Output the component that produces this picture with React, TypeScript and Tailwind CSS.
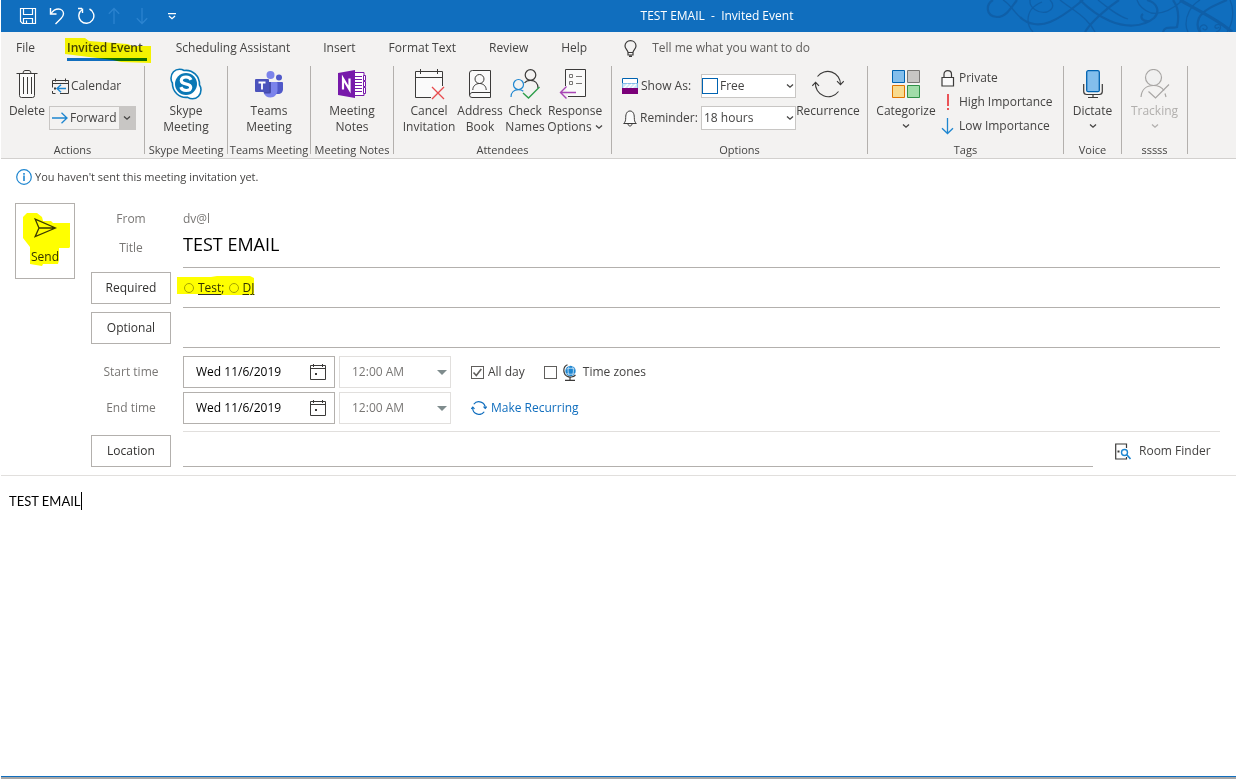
import type { ReactNode } from 'react';

const ink = '#3b3a39';
const blue = '#1e86d0';

function ChevronDown({ className = '' }: { className?: string }) {
    return (
        <svg width="8" height="6" viewBox="0 0 8 6" fill="none" stroke="currentColor" strokeWidth="1.3" className={className} aria-hidden="true">
            <path d="M1 1.500 4 4.200 7 1.500" />
        </svg>
    );
}

function SaveIcon() {
    return (
        <svg width="18" height="18" viewBox="0 0 18 18" fill="none" stroke="#fff" strokeWidth="1.2" aria-hidden="true">
            <path d="M1.5 1.5h15v15h-13l-2-2z" />
            <path d="M4.500 1.500v6h9v-6M4.500 16.500v-5h9v5M7.500 16.500v-3" />
        </svg>
    );
}

function UndoIcon() {
    return (
        <svg width="16" height="18" viewBox="0 0 16 18" fill="none" stroke="#fff" strokeWidth="1.4" aria-hidden="true">
            <path d="M1.500 1v6h6" />
            <path d="M1.800 6.800C4 3.500 6.500 2 9.500 2c3 0 5 2.200 5 4.800 0 2.200-1 3.200-2.500 4.700L6.500 17" />
        </svg>
    );
}

function RedoIcon() {
    return (
        <svg width="18" height="18" viewBox="0 0 18 18" fill="none" stroke="#fff" strokeWidth="1.4" aria-hidden="true">
            <path d="M5 1.500h-4M5.500 1.500v4.500" />
            <path d="M5.300 2.500A7.500 7.500 0 1 0 12.500 2" />
        </svg>
    );
}

function VerticalArrow({ down = false }: { down?: boolean }) {
    return (
        <svg width="12" height="18" viewBox="0 0 12 18" fill="none" stroke="#2b83cf" strokeWidth="1.300" className={down ? 'rotate-180' : ''} aria-hidden="true">
            <path d="M6 17V1.500M.8 6.700 6 1.500l5.200 5.200" />
        </svg>
    );
}

function Swirls() {
    return (
        <svg width="250" height="32" viewBox="0 0 250 32" fill="none" stroke="#0f5fa8" className="absolute right-0 top-0" aria-hidden="true">
            <g strokeWidth="1.300">
                <path d="M17 0C24 4 28 12 34 17" />
                <path d="M56 2C46 6 42 12 42 20c0 5 2 9 5 12" />
                <path d="M64 0c4 4 4 9-3 12-8 2-18-4-17-12" />
                <path d="M74 0c10 8 18 12 26 20 4 4 7 8 9 12" />
                <path d="M112 0c10 8 20 16 30 19" />
                <path d="M151 0c2 6 6 10 14 13 12 2 22-4 32-13" />
                <path d="M214 0c-10 6-14 16-14 24 0 3 1 6 2 8" />
                <path d="M244 0c4 8 4 22-3 32" />
                <path d="M215 32c-4-5 3-10 6-5 1 3-4 4-4 1M230 32c6-2 6-10 0-7-3 2 1 5 3 2" />
            </g>
            <g strokeWidth="2.200">
                <path d="M31 0C25 8 20 17 11 17-1 16 0 4 7 0" />
                <path d="M34 17c8 8 20 9 30 5 13-5 23-14 33-22" />
                <path d="M94 0c8 8 18 16 30 21 14 6 32 7 44-3 6-6 4-15-7-18" />
                <path d="M163 21c-6 1-10-4-6-7" />
                <path d="M99 32c6-10 22-24 34-32" />
                <path d="M187 0c6 8 6 18 4 27-4 2-12-2-14 5" />
                <path d="M241 0c-12 5-24 10-28 18-2 5-2 10 1 14" />
            </g>
            <path d="M194 0c14 8 30 16 43 25 4 3 7 5 9 7" strokeWidth="3.200" />
        </svg>
    );
}

function TrashIcon() {
    return (
        <svg width="22" height="28" viewBox="0 0 22 28" fill="none" stroke={ink} aria-hidden="true">
            <path d="M3.500 4v21.500q0 2 2 2h11q2 0 2-2V4" fill="#fafafa" />
            <path d="M.5 3.500h21M7 3.500Q7 .5 9 .5h4q2 0 2 3M7.500 7v17M11.500 7v17M15.500 7v17" />
        </svg>
    );
}

function CalendarBackIcon() {
    return (
        <svg width="17" height="17" viewBox="0 0 17 17" fill="none" stroke={ink} aria-hidden="true">
            <path d="M8 15.500h8.500v-13H.5v7M.5 5.500h16M3.500.5v3M13.500.5v3M.5 13v2.500h3" />
            <path d="M14 10.500H5M9 6.700 5 10.500l4 3.800" stroke={blue} strokeWidth="1.400" />
            <path d="M2 9.500h2v2H2z" fill={ink} stroke="none" />
        </svg>
    );
}

function ForwardIcon() {
    return (
        <svg width="16" height="12" viewBox="0 0 16 12" fill="none" stroke={blue} strokeWidth="1.300" aria-hidden="true">
            <path d="M0 6h15M9.500.8 15 6l-5.500 5.200" />
        </svg>
    );
}

function SkypeIcon() {
    return (
        <svg width="32" height="32" viewBox="0 0 32 32" aria-hidden="true">
            <path
                d="M9.500 1.200c2 0 3.500.6 4.600 1.300C22.500 1.300 29.800 8 29.500 17c1 1.300 1.500 3 1.500 4.800 0 5-3.800 9-8.500 9-2 0-3.500-.6-4.800-1.500C9 30.300 2.300 23.500 2.400 15 1.500 13.700 1 12 1 10.200c0-5 3.800-9 8.500-9z"
                fill="#fff"
                stroke="#0a78b5"
                strokeWidth="1.600"
            />
            <circle cx="16" cy="16" r="11" fill="#0a78b5" />
            <path
                d="M21 11.800c-.8-2-2.600-2.800-5-2.800-2.800 0-4.700 1.200-4.700 3.400 0 4.800 9.400 2.400 9.400 6.800 0 2.200-2.100 3.300-4.600 3.300-2.800 0-4.400-1.100-5.300-3.300"
                fill="none"
                stroke="#fff"
                strokeWidth="3.200"
            />
        </svg>
    );
}

function TeamsIcon() {
    return (
        <svg width="28" height="27" viewBox="0 0 28 27" aria-hidden="true">
            <circle cx="24" cy="6.500" r="3" fill="#5059c9" />
            <circle cx="15.500" cy="4" r="4" fill="#7b83eb" />
            <path d="M20 11h7q1 0 1 1v6c0 3-2 5-5 5h-3z" fill="#5059c9" />
            <path d="M10 11h11.500q1 0 1 1v7c0 4-3 7.500-7 7.500-3.500 0-6-2-7-5z" fill="#7b83eb" />
            <path d="M10 11h6v10q0 1.500-1.500 1.500H9z" fill="#444bab" />
            <rect y="8" width="14" height="13" rx="1" fill="#4b53bc" />
            <path d="M3.500 11.500h7M7 11.500v7" stroke="#fff" strokeWidth="1.800" />
        </svg>
    );
}

function OneNoteIcon() {
    return (
        <svg width="28" height="28" viewBox="0 0 28 28" aria-hidden="true">
            <path d="M15 2.500h11v23H15" fill="#fff" stroke="#7719aa" />
            <path d="M17 6.500h7M17 9.500h7M17 12.500h7M17 15.500h7M17 18.500h7M17 21.500h7" stroke="#7719aa" />
            <path d="M25.500 5.500h2v5h-2zM25.500 11.500h2v5h-2zM25.500 17.500h2v6h-2z" fill="#fff" stroke="#7719aa" />
            <path d="M0 3 17 0v28L0 25z" fill="#7719aa" />
            <path d="M5 19.500v-11l6.500 11v-11" fill="none" stroke="#fff" strokeWidth="2.200" />
        </svg>
    );
}

function CancelInvitationIcon() {
    return (
        <svg width="31" height="31" viewBox="0 0 31 31" fill="none" stroke={ink} aria-hidden="true">
            <path d="M17 28.500H1.500v-26h27V17" fill="#fafafa" />
            <path d="M1.500 8.500h27M6.500 0v5M23.500 0v5" />
            <path d="m18 18 12 12M30 18 18 30" stroke="#e84a4d" strokeWidth="1.300" />
        </svg>
    );
}

function AddressBookIcon() {
    return (
        <svg width="22" height="28" viewBox="0 0 22 28" fill="none" stroke={ink} aria-hidden="true">
            <path d="M21.500.5H3.500Q.5.5.5 3v22q0 2.500 2.500 2.500h18.500z" fill="#fafafa" />
            <path d="M21 22.500H3Q.7 23 .7 25" />
            <circle cx="10.500" cy="9" r="4.500" />
            <path d="M3.800 20c0-4 3-6.500 6.700-6.500s6.700 2.500 6.700 6.500" />
        </svg>
    );
}

function CheckNamesIcon() {
    return (
        <svg width="30" height="30" viewBox="0 0 30 30" fill="none" strokeWidth="1.200" aria-hidden="true">
            <circle cx="20.500" cy="6" r="5.300" stroke={ink} />
            <path d="M14.500 14c1.500-2 3.500-2.700 6-2.700 4.500 0 7.500 3 7.500 7.700" stroke={ink} />
            <circle cx="8.500" cy="15.500" r="5" stroke={blue} />
            <path d="M1 28c0-4.500 3-7.300 7.500-7.300 2 0 3.500.5 4.800 1.500" stroke={blue} />
            <path d="m13 24 5.500 5L29.500 18" stroke="#2e9e4b" strokeWidth="1.400" />
        </svg>
    );
}

function ResponseIcon() {
    return (
        <svg width="32" height="30" viewBox="0 0 32 30" fill="none" stroke={ink} aria-hidden="true">
            <path d="M6.500 17V.5h20v27H9" fill="#fafafa" />
            <path d="M10.500 5.500h3v3h-3zM10.500 12.500h3v3h-3zM17 7.500h6M17 14.500h6" stroke="#797775" />
            <path d="M17 23.500H1.500M7.500 17.500l-6 6 6 6" stroke="#a846b5" strokeWidth="1.400" />
        </svg>
    );
}

function ShowAsIcon() {
    return (
        <svg width="16" height="16" viewBox="0 0 16 16" aria-hidden="true">
            <path d="M.5.5h15v5H.5z" fill="#fff" stroke="#0063b1" />
            <path d="M.5 5.500h15v5H.5z" fill="#cfe6f8" stroke="#83bde9" />
            <path d="m2 10 4-4M6 10l4-4M10 10l4-4" stroke="#fff" strokeWidth="1.300" />
            <path d="M0 10h16v6H0z" fill="#7a0078" />
        </svg>
    );
}

function BellIcon() {
    return (
        <svg width="14" height="17" viewBox="0 0 14 17" fill="none" stroke={ink} aria-hidden="true">
            <path d="M.7 13.500c1.800-1.500 2-3.500 2-6 0-4 1.500-6.500 4.300-6.500s4.300 2.500 4.300 6.500c0 2.500.2 4.500 2 6z" fill="#fafafa" />
            <path d="M5 14c.3 2.700 3.700 2.700 4 0" />
        </svg>
    );
}

function RecurrenceIcon({ size = 32, color = ink }: { size?: number; color?: string }) {
    return (
        <svg width={size} height={(size * 28) / 32} viewBox="0 0 32 28" fill="none" stroke={color} strokeWidth={size > 20 ? 1.1 : 2.4} aria-hidden="true">
            <path d="M28.500 14.500A12.800 12.800 0 0 0 5.500 6.500M3.500 12.500a12.800 12.800 0 0 0 23 9" />
            <path d="m25 11.200 3.500 3.500 3.300-3.500M.3 15.800l3.300-3.500 3.400 3.500" />
        </svg>
    );
}

function CategorizeIcon() {
    return (
        <svg width="28" height="28" viewBox="0 0 28 28" aria-hidden="true">
            <path d="M.5.500h12v12H.5z" fill="#83beec" stroke="#0063b1" />
            <path d="M15.500.500h12v12h-12z" fill="#c8c6c4" stroke="#797775" />
            <path d="M.5 15.500h12v12H.5z" fill="#f8db8f" stroke="#e07400" />
            <path d="M15.500 15.500h12v12h-12z" fill="#a1dca9" stroke="#309048" />
        </svg>
    );
}

function LockIcon() {
    return (
        <svg width="14" height="17" viewBox="0 0 14 17" fill="none" stroke={ink} strokeWidth="1.200" aria-hidden="true">
            <path d="M1 7.500h11.500v8.500H1z" fill="#fafafa" />
            <path d="M3 7.500V4.200C3 2 4.500.7 6.700.7s3.800 1.300 3.800 3.500v3.300" />
        </svg>
    );
}

function HighIcon() {
    return (
        <svg width="14" height="17" viewBox="0 0 14 17" fill="#ea5357" aria-hidden="true">
            <path d="M6 0h2v12H6zM6 14h2v2H6z" />
        </svg>
    );
}

function LowIcon() {
    return (
        <svg width="14" height="17" viewBox="0 0 14 17" fill="none" stroke={blue} strokeWidth="1.300" aria-hidden="true">
            <path d="M6.500 0v15.500M1 10.200l5.500 5.300 5.500-5.300" />
        </svg>
    );
}

function MicIcon() {
    return (
        <svg width="20" height="28" viewBox="0 0 20 28" fill="none" stroke={ink} aria-hidden="true">
            <path d="M.7 14v7.500q0 3 3 3h12.600q3 0 3-3V14M10 24.500v3M5 27.500h10" strokeWidth="1.200" />
            <rect x="3.700" y=".7" width="12.600" height="21" rx="1.500" fill="#83beec" stroke="#0063b1" strokeWidth="1.300" />
        </svg>
    );
}

function TrackingIcon() {
    return (
        <svg width="30" height="30" viewBox="0 0 30 30" fill="none" stroke="#a8a6a4" strokeWidth="1.200" aria-hidden="true">
            <circle cx="13.500" cy="8.500" r="8" fill="#f0f0f0" />
            <path d="M1 28c.5-7 5-11.500 12.500-11.500 5 0 8.500 2 10.500 5M26 28l-1-3.500" />
            <path d="m8.500 22.500 7 6.500L29 15.500" />
        </svg>
    );
}

function BulbIcon() {
    return (
        <svg width="13" height="17" viewBox="0 0 13 17" fill="none" stroke={ink} strokeWidth="1.200" aria-hidden="true">
            <path d="M4 12.500c0-2.500-3-3.500-3-6.500 0-3.200 2.500-5.300 5.500-5.300S12 2.800 12 6c0 3-3 4-3 6.500zM4 12.500V15h5v-2.500M5 16.300h3" />
        </svg>
    );
}

function SendIcon() {
    return (
        <svg width="23" height="20" viewBox="0 0 23 20" fill="none" stroke={ink} strokeWidth="1.300" aria-hidden="true">
            <path d="M1.200 1.200 21.500 10 1.200 18.500 5 10zM5 10h16" />
        </svg>
    );
}

function DateIcon() {
    return (
        <svg width="16" height="17" viewBox="0 0 16 17" fill="none" stroke={ink} aria-hidden="true">
            <path d="M.5 1.500h15v14H.5zM.5 4.500h15M3.500 0v3M12.500 0v3" />
            <path d="M5 9h2v2H5z" fill={ink} stroke="none" />
        </svg>
    );
}

function GlobeIcon() {
    return (
        <svg width="14" height="17" viewBox="0 0 14 17" fill="none" aria-hidden="true">
            <circle cx="7.500" cy="7" r="5.200" fill="#1e86d0" />
            <path d="M3.500 5c3-1 6-1 8 0M3.500 9.500c3 1 6 1 8 0M6 2.500c-1.500 3-1 6 0 9M9.500 2.500c1.500 3 1 6 0 9" stroke="#cfe6f8" strokeWidth=".8" />
            <path d="M4.500.8C1.500 2 .5 5 1 8c.8 3.500 4 5.500 7.500 5 1.700-.3 3-1 4-2M7 13v3M2 16.300h10" stroke={ink} strokeWidth="1.200" />
        </svg>
    );
}

function RoomFinderIcon() {
    return (
        <svg width="16" height="17" viewBox="0 0 16 17" fill="none" aria-hidden="true">
            <path d="M11.500 5V1H.7v15h10.800v-2" stroke={ink} strokeWidth="1.200" />
            <path d="M2.500 7.500h2v2h-2z" fill={ink} />
            <circle cx="9.500" cy="9.500" r="3" stroke={blue} strokeWidth="1.400" />
            <path d="m11.800 11.800 3.700 4.200" stroke={blue} strokeWidth="1.600" />
        </svg>
    );
}

interface RibbonButtonProps {
    icon: ReactNode;
    lines: string[];
    menu?: 'inline' | 'below';
    disabled?: boolean;
    className?: string;
}

function RibbonButton({ icon, lines, menu, disabled, className = '' }: RibbonButtonProps) {
    return (
        <button
            type="button"
            disabled={disabled}
            className={`flex shrink-0 flex-col items-center whitespace-nowrap leading-4 disabled:text-[#b1afad] ${className}`}
        >
            <span className="mb-px flex h-9 items-center justify-center">{icon}</span>
            {lines.map((line, i) => (
                <span key={line} className="flex items-center gap-[3px]">
                    {line}
                    {menu === 'inline' && i === lines.length - 1 && <ChevronDown />}
                </span>
            ))}
            {menu === 'below' && <ChevronDown className="mt-1" />}
        </button>
    );
}

function RibbonGroup({ label, className, children }: { label: string; className: string; children: ReactNode }) {
    return (
        <>
            <section aria-label={label} className={`flex shrink-0 flex-col ${className}`}>
                <div className="flex h-[76px]">{children}</div>
                <div className="whitespace-nowrap text-center text-[11px] leading-4">{label}</div>
            </section>
            <div className="h-[88px] w-px shrink-0 bg-[#b3b0ad]" />
        </>
    );
}

function FieldButton({ children }: { children: ReactNode }) {
    return (
        <button type="button" className="h-8 w-20 shrink-0 border border-[#b3b0ad] text-[#323130]">
            {children}
        </button>
    );
}

function TimeRow({ label, id, children }: { label: string; id: string; children: ReactNode }) {
    return (
        <div className="flex items-center gap-3">
            <label htmlFor={id} className="w-20 text-center text-[#797775]">
                {label}
            </label>
            <div className="flex h-8 items-center gap-1">
                <div className="flex h-8 w-[152px] items-center border border-[#b3b0ad] pr-2">
                    <input id={id} type="text" defaultValue="Wed 11/6/2019" className="min-w-0 flex-1 pl-3 text-black outline-none" />
                    <button type="button" aria-label={`Pick ${label.toLowerCase()}`}>
                        <DateIcon />
                    </button>
                </div>
                <div className="relative">
                    <select
                        disabled
                        aria-label={`${label} hour`}
                        className="h-8 w-28 appearance-none border border-[#e1dfdd] bg-white pl-3 text-[#797775] opacity-100"
                    >
                        <option>12:00 AM</option>
                    </select>
                    <svg width="10" height="5" viewBox="0 0 10 5" className="pointer-events-none absolute right-1 top-[14px]" aria-hidden="true">
                        <path d="M0 0h10L5 5z" fill="#7f8c8d" />
                    </svg>
                </div>
                {children}
            </div>
        </div>
    );
}

const tabs = ['Scheduling Assistant', 'Insert', 'Format Text', 'Review', 'Help'];

export default function App() {
    return (
        <div className="ml-px mr-[14px] flex min-h-screen flex-col bg-white font-['Open_Sans','Noto_Sans',sans-serif] text-xs text-[#444342]">
            <header className="relative flex h-8 items-center overflow-hidden bg-[#106ebe] text-white">
                <div className="flex w-[197px] shrink-0 items-center gap-3 pl-[18px]">
                    <button type="button" aria-label="Save"><SaveIcon /></button>
                    <button type="button" aria-label="Undo"><UndoIcon /></button>
                    <button type="button" aria-label="Redo"><RedoIcon /></button>
                    <div className="flex gap-4 pl-px pr-1">
                        <button type="button" aria-label="Previous"><VerticalArrow /></button>
                        <button type="button" aria-label="Next"><VerticalArrow down /></button>
                    </div>
                    <button type="button" aria-label="Customize toolbar" className="ml-1">
                        <svg width="8" height="7" viewBox="0 0 8 7" fill="none" stroke="#fff" aria-hidden="true">
                            <path d="M0 .5h8M1 3l3 2.700L7 3" strokeWidth="1.300" />
                        </svg>
                    </button>
                </div>
                <Swirls />
                <h1 className="relative flex-1 whitespace-pre pb-px text-center">{'TEST EMAIL  -  Invited Event'}</h1>
            </header>

            <div className="overflow-hidden border-b border-[#d2d0ce] bg-[#f3f2f1]">
                <nav className="flex h-[34px] items-center whitespace-nowrap pb-[2px] pl-[15px]">
                    <a href="#file" className="mr-8">File</a>
                    <a href="#invited-event" className="relative mr-[33px] font-semibold">
                        Invited Event
                        <span className="absolute -right-1 left-0 top-[18px] h-[3px] bg-[#106ebe]" />
                        <svg
                            width="86"
                            height="26"
                            viewBox="0 0 86 26"
                            className="pointer-events-none absolute -left-[2px] -top-[2px] mix-blend-multiply"
                            aria-hidden="true"
                        >
                            <path d="M0 0h20l4 3 38 3 6 2h18v17l-30-1-8-2-48-6z" fill="#ffff00" />
                        </svg>
                    </a>
                    {tabs.map((tab) => (
                        <a key={tab} href={`#${tab.toLowerCase().replace(' ', '-')}`} className="mr-[33px]">
                            {tab}
                        </a>
                    ))}
                    <label htmlFor="tell-me" aria-label="Tell me" className="ml-1 mr-[15px]"><BulbIcon /></label>
                    <input
                        id="tell-me"
                        type="text"
                        placeholder="Tell me what you want to do"
                        className="w-60 outline-none placeholder:text-[#605e5c]"
                    />
                </nav>

                <div className="flex h-[92px]">
                    <RibbonGroup label="Actions" className="w-[143px]">
                        <RibbonButton icon={<TrashIcon />} lines={['Delete']} className="ml-1 w-11" />
                        <div className="flex flex-col gap-2 pt-2">
                            <button type="button" className="flex h-6 items-center gap-[2px] pl-[3px]">
                                <CalendarBackIcon />
                                Calendar
                            </button>
                            <div className="flex h-6 border border-[#c8c6c4]">
                                <button type="button" className="flex items-center gap-[2px] px-[2px]">
                                    <ForwardIcon />
                                    Forward
                                </button>
                                <button type="button" aria-label="Forward options" className="flex w-4 items-center justify-center bg-[#c8c6c4]">
                                    <ChevronDown />
                                </button>
                            </div>
                        </div>
                    </RibbonGroup>
                    <RibbonGroup label="Skype Meeting" className="w-[82px]">
                        <RibbonButton icon={<SkypeIcon />} lines={['Skype', 'Meeting']} className="w-full" />
                    </RibbonGroup>
                    <RibbonGroup label="Teams Meeting" className="w-[82px]">
                        <RibbonButton icon={<TeamsIcon />} lines={['Teams', 'Meeting']} className="w-full" />
                    </RibbonGroup>
                    <RibbonGroup label="Meeting Notes" className="w-[82px]">
                        <RibbonButton icon={<OneNoteIcon />} lines={['Meeting', 'Notes']} className="w-full" />
                    </RibbonGroup>
                    <RibbonGroup label="Attendees" className="w-[217px]">
                        <RibbonButton icon={<CancelInvitationIcon />} lines={['Cancel', 'Invitation']} className="ml-2 w-[54px]" />
                        <RibbonButton icon={<AddressBookIcon />} lines={['Address', 'Book']} className="w-12" />
                        <RibbonButton icon={<CheckNamesIcon />} lines={['Check', 'Names']} className="w-[42px]" />
                        <RibbonButton icon={<ResponseIcon />} lines={['Response', 'Options']} menu="inline" className="w-[58px]" />
                    </RibbonGroup>
                    <RibbonGroup label="Options" className="w-[255px]">
                        <div className="ml-[10px] grid w-[174px] grid-cols-[79px_95px] content-start gap-y-2 pt-2">
                            <label htmlFor="show-as" className="flex items-center gap-[3px] whitespace-nowrap">
                                <ShowAsIcon />
                                Show As:
                            </label>
                            <div className="relative flex items-center">
                                <select id="show-as" className="h-6 w-full appearance-none border border-[#c8c6c4] bg-white pl-[18px]">
                                    <option>Free</option>
                                </select>
                                <span className="pointer-events-none absolute left-px size-4 border border-[#0063b1]" />
                                <ChevronDown className="pointer-events-none absolute right-[2px]" />
                            </div>
                            <label htmlFor="reminder" className="flex items-center gap-[3px] whitespace-nowrap pl-px">
                                <BellIcon />
                                Reminder:
                            </label>
                            <div className="relative flex items-center">
                                <select id="reminder" className="h-6 w-full appearance-none border border-[#c8c6c4] bg-white pl-[2px]">
                                    <option>18 hours</option>
                                </select>
                                <ChevronDown className="pointer-events-none absolute right-[2px]" />
                            </div>
                        </div>
                        <RibbonButton icon={<RecurrenceIcon />} lines={['Recurrence']} className="w-16" />
                    </RibbonGroup>
                    <RibbonGroup label="Tags" className="w-[195px]">
                        <RibbonButton icon={<CategorizeIcon />} lines={['Categorize']} menu="below" className="ml-2 w-[60px]" />
                        <div className="ml-[5px] flex flex-col whitespace-nowrap">
                            <button type="button" className="flex h-6 items-center gap-1"><LockIcon />Private</button>
                            <button type="button" className="flex h-6 items-center gap-1"><HighIcon />High Importance</button>
                            <button type="button" className="flex h-6 items-center gap-1"><LowIcon />Low Importance</button>
                        </div>
                    </RibbonGroup>
                    <RibbonGroup label="Voice" className="w-[57px]">
                        <RibbonButton icon={<MicIcon />} lines={['Dictate']} menu="below" className="w-full" />
                    </RibbonGroup>
                    <RibbonGroup label="sssss" className="w-[65px]">
                        <RibbonButton icon={<TrackingIcon />} lines={['Tracking']} menu="below" disabled className="w-full" />
                    </RibbonGroup>
                </div>
            </div>

            <p className="flex h-9 items-center gap-[3px] pl-[15px] text-[11px]">
                <svg width="16" height="16" viewBox="0 0 16 16" fill="none" stroke={blue} aria-hidden="true">
                    <circle cx="8" cy="8" r="7.300" strokeWidth="1.200" />
                    <path d="M8 6.500V12M8 4v1.700" strokeWidth="1.600" />
                </svg>
                You haven't sent this meeting invitation yet.
            </p>

            <form className="flex gap-4 border-b border-[#e1dfdd] pb-2 pl-[14px] pt-2">
                <button type="button" className="relative flex h-[76px] w-[60px] shrink-0 flex-col items-center border border-[#b3b0ad] pt-[14px] text-[#323130]">
                    <SendIcon />
                    <span className="mt-[11px] leading-4">Send</span>
                    <svg
                        width="47"
                        height="53"
                        viewBox="0 0 47 53"
                        className="pointer-events-none absolute left-[7px] top-[9px] mix-blend-multiply"
                        aria-hidden="true"
                    >
                        <path d="M0 4 4 0h10l5 4 1 4h8l2 2h17v24l-1 1H36v12l-1 4H20l-1 2-12-2V34L0 25z" fill="#ffff00" />
                    </svg>
                </button>

                <div className="min-w-0 flex-1">
                    <div className="mr-4 flex h-8 items-center gap-3 text-[#797775]">
                        <span className="w-20 text-center">From</span>
                        <span>dv@l</span>
                    </div>
                    <div className="mr-4 flex h-[33px] gap-3">
                        <label htmlFor="title" className="w-20 shrink-0 text-center leading-[26px] text-[#797775]">Title</label>
                        <input id="title" type="text" defaultValue="TEST EMAIL" className="min-w-0 flex-1 border-b border-[#b3b0ad] pb-[14px] text-lg leading-5 text-black outline-none" />
                    </div>
                    <div className="mr-4 flex h-10 gap-3 pt-1">
                        <FieldButton>Required</FieldButton>
                        <div className="-mt-1 flex flex-1 items-center border-b border-[#b3b0ad] text-[#323130]">
                            <div className="relative flex items-center gap-1 pl-px">
                                <span className="size-[10px] rounded-full border border-[#a6a4a2]" />
                                <span><a href="#test" className="underline underline-offset-2">Test</a>;</span>
                                <span className="size-[10px] rounded-full border border-[#a6a4a2]" />
                                <a href="#dj" className="underline underline-offset-2">DJ</a>
                                <svg
                                    width="77"
                                    height="20"
                                    viewBox="0 0 77 20"
                                    className="pointer-events-none absolute -left-[6px] -top-1 mix-blend-multiply"
                                    aria-hidden="true"
                                >
                                    <path d="M0 1h34l6-1h33l4 2v17H40l-3-1H0z" fill="#ffff00" />
                                </svg>
                            </div>
                        </div>
                    </div>
                    <div className="mr-4 flex h-10 gap-3 pt-1">
                        <FieldButton>Optional</FieldButton>
                        <input type="text" aria-label="Optional" className="-mt-1 min-w-0 flex-1 border-b border-[#b3b0ad] outline-none" />
                    </div>
                    <div className="flex flex-col gap-1 pb-[7px] pt-2">
                        <TimeRow label="Start time" id="start">
                            <label className="ml-4 flex items-center gap-1">
                                <span className="relative flex">
                                    <input type="checkbox" defaultChecked className="peer size-[13px] appearance-none border border-[#605e5c]" />
                                    <svg width="13" height="13" viewBox="0 0 13 13" className="pointer-events-none invisible absolute inset-0 peer-checked:visible" fill="none" stroke="#605e5c" strokeWidth="1.600" aria-hidden="true">
                                        <path d="m2.500 6.500 2.800 3 5-6.500" />
                                    </svg>
                                </span>
                                All day
                            </label>
                            <label className="ml-[15px] flex items-center gap-[6px]">
                                <input type="checkbox" className="size-[13px] appearance-none border border-[#605e5c]" />
                                <GlobeIcon />
                                Time zones
                            </label>
                        </TimeRow>
                        <TimeRow label="End time" id="end">
                            <button type="button" className="ml-4 flex items-center gap-1 text-[#106ebe]">
                                <RecurrenceIcon size={16} color="#106ebe" />
                                Make Recurring
                            </button>
                        </TimeRow>
                    </div>
                    <div className="ml-[92px] mr-4 border-b border-[#e1dfdd]" />
                    <div className="flex items-center gap-3 pt-[3px]">
                        <FieldButton>Location</FieldButton>
                        <input type="text" aria-label="Location" className="h-8 min-w-0 flex-1 border-b border-[#b3b0ad] outline-none" />
                        <button type="button" className="flex w-[131px] shrink-0 items-center gap-2 pl-[10px]">
                            <RoomFinderIcon />
                            Room Finder
                        </button>
                    </div>
                </div>
            </form>

            <main className="flex flex-1 items-start px-2 pt-4">
                <textarea
                    aria-label="Message body"
                    rows={1}
                    defaultValue="TEST EMAIL"
                    className="field-sizing-content resize-none overflow-hidden font-['Lato','Open_Sans',sans-serif] text-[13px] leading-[18px] text-black outline-none"
                />
                <span className="h-[18px] w-px bg-black" />
            </main>
            <footer className="h-[3px] border-t border-[#106ebe] bg-[#a6a6a6]" />
        </div>
    );
}
